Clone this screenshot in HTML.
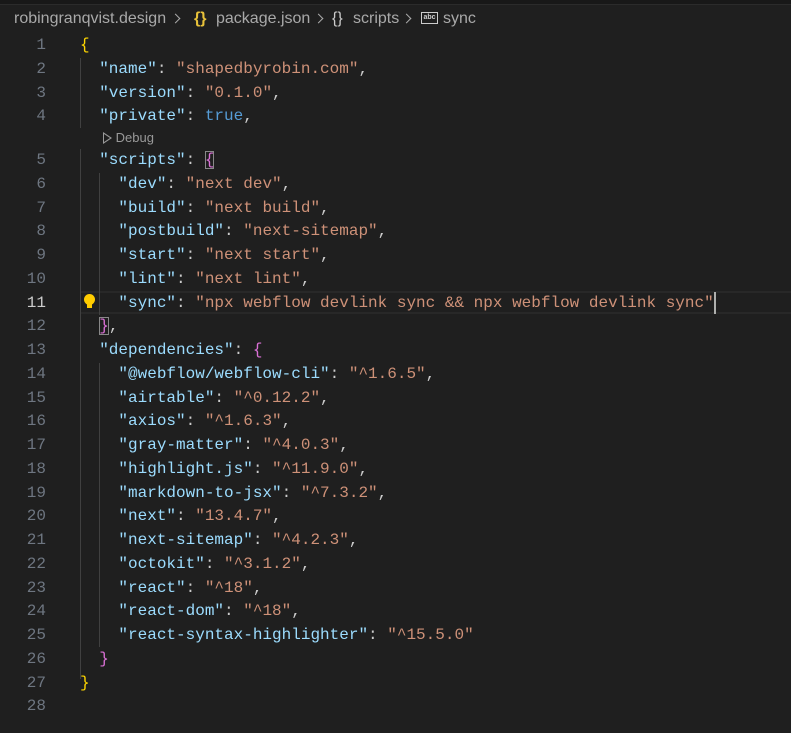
<!DOCTYPE html>
<html><head><meta charset="utf-8"><style>
*{margin:0;padding:0;box-sizing:border-box}
body{width:791px;height:733px;background:#1f1f1f;overflow:hidden;position:relative;font-family:"Liberation Mono",monospace;}
.top{position:absolute;left:0;top:0;width:791px;height:5px;background:#181818;border-bottom:1px solid #2b2b2b}
.bc{position:absolute;top:10px;font:16px "Liberation Sans",sans-serif;color:#a9a9a9;white-space:nowrap}
.chev{position:absolute;top:15px;width:7px;height:7px;border-right:1.5px solid #a9a9a9;border-top:1.5px solid #a9a9a9;transform:rotate(45deg)}
.ln{position:absolute;left:0;width:46px;text-align:right;font-size:16px;color:#6e7681;line-height:23.75px}
.cl{position:absolute;left:80px;font-size:16px;color:#cccccc;white-space:pre;line-height:23.75px}
.k{color:#9cdcfe}.s{color:#ce9178}.b{color:#569cd6}.y{color:#ffd700}.p{color:#da70d6}.bl{color:#179fff}
.g{position:absolute;width:1px;background:#404040}
.box{outline:1px solid #888;outline-offset:-1px}
</style></head><body>
<div class="top"></div>
<div class="bc" style="left:14px">robingranqvist.design</div>
<div class="chev" style="left:172px"></div>
<div class="bc" style="left:194px;color:#e8c23a;font-weight:bold">{}</div>
<div class="bc" style="left:216px">package.json</div>
<div class="chev" style="left:315px"></div>
<div class="bc" style="left:332px;color:#ccc">{}</div>
<div class="bc" style="left:353px">scripts</div>
<div class="chev" style="left:403px"></div>
<div style="position:absolute;left:421px;top:12px;width:17px;height:12px;border:1.5px solid #ccc;font:bold 7px 'Liberation Sans',sans-serif;color:#ccc;text-align:center;line-height:9px">abc</div>
<div class="bc" style="left:443px">sync</div>
<div style="position:absolute;left:80px;right:0;top:291px;height:23px;border-top:2px solid #282828;border-bottom:2px solid #282828"></div>
<div class="g" style="left:80px;top:58px;height:70px"></div>
<div class="g" style="left:80px;top:149px;height:530px"></div>
<div class="g" style="left:99px;top:173px;height:142px"></div>
<div class="g" style="left:99px;top:363px;height:284px"></div>
<div style="position:absolute;left:103px;top:130px;font:13px 'Liberation Sans',sans-serif;color:#999"><span style="display:inline-block;width:0;height:0;border-left:9px solid transparent;border-top:6px solid transparent;border-bottom:6px solid transparent;position:relative;vertical-align:-2px"><span style="position:absolute;left:-9px;top:-6px;width:0;height:0;border-left:9px solid #999;border-top:6px solid transparent;border-bottom:6px solid transparent"></span><span style="position:absolute;left:-8px;top:-4px;width:0;height:0;border-left:6px solid #1f1f1f;border-top:4px solid transparent;border-bottom:4px solid transparent"></span></span> Debug</div>
<div style="position:absolute;left:84px;top:294px;width:11px;height:11px;border-radius:50%;background:#ffcc00"></div>
<div style="position:absolute;left:87px;top:304px;width:5px;height:4px;background:#ffcc00"></div>
<div style="position:absolute;left:714px;top:292px;width:2px;height:22px;background:#aeafad"></div>
<div id="c"></div>
<script>
const L=[
'<span class="y">{</span>',
'  <span class="k">"name"</span>: <span class="s">"shapedbyrobin.com"</span>,',
'  <span class="k">"version"</span>: <span class="s">"0.1.0"</span>,',
'  <span class="k">"private"</span>: <span class="b">true</span>,',
'  <span class="k">"scripts"</span>: <span class="p box">{</span>',
'    <span class="k">"dev"</span>: <span class="s">"next dev"</span>,',
'    <span class="k">"build"</span>: <span class="s">"next build"</span>,',
'    <span class="k">"postbuild"</span>: <span class="s">"next-sitemap"</span>,',
'    <span class="k">"start"</span>: <span class="s">"next start"</span>,',
'    <span class="k">"lint"</span>: <span class="s">"next lint"</span>,',
'    <span class="k">"sync"</span>: <span class="s">"npx webflow devlink sync &amp;&amp; npx webflow devlink sync"</span>',
'  <span class="p box">}</span>,',
'  <span class="k">"dependencies"</span>: <span class="p">{</span>',
'    <span class="k">"@webflow/webflow-cli"</span>: <span class="s">"^1.6.5"</span>,',
'    <span class="k">"airtable"</span>: <span class="s">"^0.12.2"</span>,',
'    <span class="k">"axios"</span>: <span class="s">"^1.6.3"</span>,',
'    <span class="k">"gray-matter"</span>: <span class="s">"^4.0.3"</span>,',
'    <span class="k">"highlight.js"</span>: <span class="s">"^11.9.0"</span>,',
'    <span class="k">"markdown-to-jsx"</span>: <span class="s">"^7.3.2"</span>,',
'    <span class="k">"next"</span>: <span class="s">"13.4.7"</span>,',
'    <span class="k">"next-sitemap"</span>: <span class="s">"^4.2.3"</span>,',
'    <span class="k">"octokit"</span>: <span class="s">"^3.1.2"</span>,',
'    <span class="k">"react"</span>: <span class="s">"^18"</span>,',
'    <span class="k">"react-dom"</span>: <span class="s">"^18"</span>,',
'    <span class="k">"react-syntax-highlighter"</span>: <span class="s">"^15.5.0"</span>',
'  <span class="p">}</span>',
'<span class="y">}</span>',
''];
let h='';
for(let i=0;i<28;i++){
 const n=i+1;
 const top = n<=4 ? 34+23.75*(n-1) : 149+23.75*(n-5);
 h+=`<div class="ln" style="top:${top}px;${n==11?'color:#cccccc':''}">${n}</div>`;
 h+=`<div class="cl" style="top:${top}px">${L[i]}</div>`;
}
document.getElementById('c').innerHTML=h;
</script>
</body></html>
